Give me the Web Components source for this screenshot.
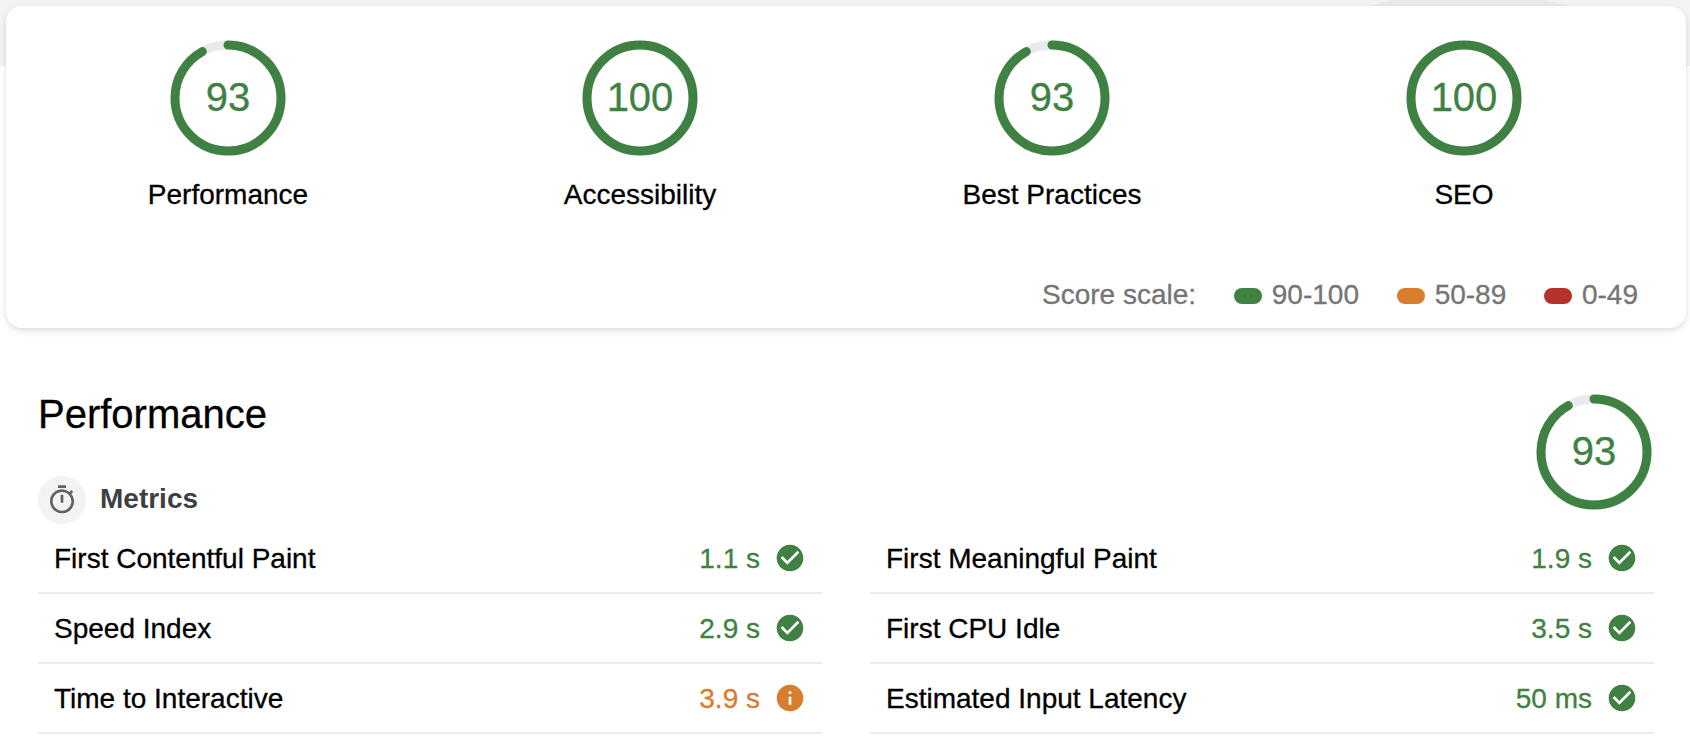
<!DOCTYPE html>
<html lang="en">
<head>
<meta charset="utf-8">
<title>Report</title>
<style>
html, body { margin: 0; height: 100%; }
body { font: 28px/32px "Liberation Sans", Arial, sans-serif; color: #000; background: #fff; overflow: hidden; -webkit-text-stroke: .3px; }
</style>
</head>
<body>
<report-page>
  <score-header>
    <score-gauge score="93">Performance</score-gauge>
    <score-gauge score="100">Accessibility</score-gauge>
    <score-gauge score="93">Best Practices</score-gauge>
    <score-gauge score="100">SEO</score-gauge>
    <score-scale slot="scale">
      <scale-range level="pass">90-100</scale-range>
      <scale-range level="average">50-89</scale-range>
      <scale-range level="fail">0-49</scale-range>
    </score-scale>
  </score-header>
  <report-category heading="Performance" group="Metrics">
    <score-gauge slot="gauge" score="93"></score-gauge>
    <metric-row value="1.1 s">First Contentful Paint</metric-row>
    <metric-row value="1.9 s">First Meaningful Paint</metric-row>
    <metric-row value="2.9 s">Speed Index</metric-row>
    <metric-row value="3.5 s">First CPU Idle</metric-row>
    <metric-row value="3.9 s" level="average">Time to Interactive</metric-row>
    <metric-row value="50 ms">Estimated Input Latency</metric-row>
  </report-category>
</report-page>
<script>
const define = (name, render) => customElements.define(name, class extends HTMLElement {
  constructor() { super(); this.attachShadow({ mode: 'open' }); }
  connectedCallback() { this.shadowRoot.innerHTML = render(this); }
});
const COLORS = { pass: '#3f8142', average: '#d87d2e', fail: '#b53129' };
const levelColor = el => COLORS[el.getAttribute('level') || 'pass'];

define('report-page', () => `
  <style>
    :host { display: block; position: relative; width: 1690px; height: 738px; box-sizing: border-box; padding: 6px 4px 0 6px; overflow: hidden; }
    .backdrop { position: absolute; z-index: -1; inset: 0 0 auto 0; height: 66px; background: #f1f3f4; overflow: hidden; }
    .backdrop svg { display: block; width: 1690px; height: 66px; }
  </style>
  <div class="backdrop"><svg viewBox="0 0 1690 66"><circle cx="1469" cy="322" r="331" fill="#e8eaed"/></svg></div>
  <slot></slot>`);

define('score-header', () => `
  <style>
    :host { display: flex; flex-direction: column; justify-content: space-between; height: 322px; box-sizing: border-box;
      padding: 34px 16px 17px; border-radius: 16px; background: #fff;
      box-shadow: 0 2px 4px rgba(0,0,0,.07), 0 3px 10px rgba(0,0,0,.07); }
    .gauges { display: grid; grid-template-columns: repeat(4, 412px); }
  </style>
  <div class="gauges"><slot></slot></div>
  <slot name="scale"></slot>`);

define('score-gauge', el => {
  const score = +el.getAttribute('score'), c = 2 * Math.PI * 53;
  const arc = score >= 100 ? '' : `stroke-linecap="round" stroke-dasharray="${c * score / 100 - 4} ${c}"`;
  return `
  <style>
    :host { display: flex; flex-direction: column; align-items: center; gap: 23px; }
    .dial { display: grid; place-items: center; width: 116px; height: 116px; }
    .dial > * { grid-area: 1 / 1; }
    svg { display: block; width: 116px; height: 116px; fill: none; stroke-width: 9px; }
    .num { font-size: 40px; line-height: 44px; margin-top: -2px; color: ${COLORS.pass}; }
  </style>
  <div class="dial">
    <svg viewBox="0 0 116 116"><circle cx="58" cy="58" r="53" stroke="#e8eaed"/>
      <circle cx="58" cy="58" r="53" stroke="${COLORS.pass}" ${arc} transform="rotate(-90 58 58)"/></svg>
    <span class="num">${score}</span>
  </div>
  <span><slot></slot></span>`;
});

define('score-scale', () => `
  <style>
    :host { display: flex; justify-content: flex-end; align-items: center; gap: 38px; padding-right: 32px; color: #757575; }
  </style>
  <span>Score scale:</span><slot></slot>`);

define('scale-range', el => `
  <style>
    :host { display: flex; align-items: center; gap: 9.7px; }
    i { width: 28px; height: 16px; border-radius: 8px; margin-top: 1px; background: ${levelColor(el)}; }
  </style>
  <i></i><span><slot></slot></span>`);

define('report-category', el => `
  <style>
    :host { display: block; padding: 63px 32px 0; }
    header { display: flex; justify-content: space-between; height: 133px; }
    h2 { margin: 0; font-size: 40px; line-height: 46px; font-weight: 400; }
    h3 { display: flex; align-items: center; gap: 14px; margin: 39px 0 0; font-size: 28px; line-height: 32px; color: #3c4043; -webkit-text-stroke: 0; }
    h3 .label { padding-bottom: 2px; }
    .badge { display: grid; place-items: center; width: 48px; height: 48px; border-radius: 50%; background: #f1f3f4; }
    .badge svg { width: 32px; height: 32px; fill: #5f6368; }
    .gauge { padding: 3px 2px 0 0; }
    .metrics { display: grid; grid-template-columns: repeat(2, 784px); column-gap: 48px; }
  </style>
  <header>
    <div><h2>${el.getAttribute('heading')}</h2>
      <h3><span class="badge"><svg viewBox="0 0 24 24"><path d="M15 1H9v2h6V1zm-4 13h2V8h-2v6zm8.03-6.61l1.42-1.42c-.43-.51-.9-.99-1.41-1.41l-1.42 1.42A8.962 8.962 0 0 0 12 4c-4.97 0-9 4.03-9 9s4.02 9 9 9a8.994 8.994 0 0 0 7.03-14.61zM12 20c-3.87 0-7-3.13-7-7s3.13-7 7-7 7 3.13 7 7-3.13 7-7 7z"/></svg></span><span class="label">${el.getAttribute('group')}</span></h3></div>
    <div class="gauge"><slot name="gauge"></slot></div>
  </header>
  <div class="metrics"><slot></slot></div>`);

define('metric-row', el => `
  <style>
    :host { display: flex; align-items: center; height: 70px; box-sizing: border-box; padding: 0 16px; border-bottom: 2px solid #ebebeb; }
    span { padding-top: 2px; }
    .name { flex: 1; }
    .value { color: ${levelColor(el)}; }
    svg { width: 32px; height: 32px; margin-left: 14px; fill: ${levelColor(el)}; }
  </style>
  <span class="name"><slot></slot></span><span class="value">${el.getAttribute('value')}</span>
  <svg viewBox="0 0 24 24"><path d="M12 2C6.48 2 2 6.48 2 12s4.48 10 10 10 10-4.48 10-10S17.52 2 12 2z${el.getAttribute('level') === 'average'
    ? 'm1 15h-2v-6h2v6zm0-8h-2V7h2v2z' : 'm-2 15l-5-5 1.41-1.41L10 14.17l7.59-7.59L19 8l-9 9z'}"/></svg>`);
</script>
</body>
</html>
